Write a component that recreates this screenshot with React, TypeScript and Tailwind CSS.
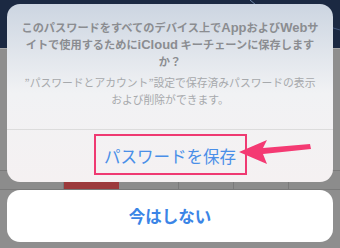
import React from 'react';

const font = { fontFamily: '"Noto Sans CJK JP", "Noto Sans", sans-serif' };

const Backdrop: React.FC = () => (
  <div className="flex flex-col h-[248px]">
    <div className="h-[48px] bg-[#1b2942] relative overflow-hidden">
      <svg width="340" height="48" className="absolute inset-0">
        <path d="M250 0 L262 10" stroke="#6f86a8" strokeWidth="1" />
        <path d="M300 18 L340 30" stroke="#41567a" strokeWidth="1" />
      </svg>
    </div>
    <div className="h-px bg-[#a8a8a8]" />
    <div className="flex-1 bg-[#8e8e8e] flex flex-col">
      <div className="h-[121px]" />
      <div className="h-[20px] flex border-y border-[#7a7a7a]">
        <div className="w-[64px] bg-[#8c8c8c] border-r border-[#7a7a7a]" />
        <div className="w-[55px] bg-[#9c3a3c]" />
        <div className="w-[60px] bg-[#8c8c8c] border-r border-[#7a7a7a]" />
        <div className="w-[55px] bg-[#8c8c8c] border-r border-[#7a7a7a]" />
        <div className="w-[55px] bg-[#8c8c8c] border-r border-[#7a7a7a]" />
        <div className="flex-1 bg-[#8c8c8c]" />
      </div>
    </div>
  </div>
);

const L: React.FC<{ children: React.ReactNode }> = ({ children }) => (
  <span className="text-[13px]" style={{ fontFamily: '"Liberation Sans", sans-serif' }}>
    {children}
  </span>
);

const App: React.FC = () => {
  return (
    <div className="w-[340px] h-[248px] relative overflow-hidden" style={font}>
      <Backdrop />
      <div className="absolute inset-0 px-[7px] pt-[4px] flex flex-col gap-[8px]">
        <div className="rounded-[13px] overflow-hidden bg-gradient-to-b from-[#ccd5e1] via-[#f1f2f4] to-[#f5f1f2] flex flex-col">
          <div className="h-[125px] flex flex-col items-center pt-[15px] text-center whitespace-nowrap">
            <p className="text-[11.2px] leading-[17px] font-bold text-[#8b8d91]">
              このパスワードをすべてのデバイス上で<L>App</L>および<L>Web</L>サ
              <br />
              イトで使用するために<L>iCloud</L> キーチェーンに保存します
              <br />
              か？
            </p>
            <p className="mt-[4px] text-[10.8px] leading-[17px] text-[#a7a9ac]">
              ”パスワードとアカウント”設定で保存済みパスワードの表示
              <br />
              および削除ができます。
            </p>
          </div>
          <div className="h-px bg-[#dcdcdc]" />
          <div className="h-[52px] relative flex items-center justify-center">
            <span className="text-[16.5px] text-[#4a8fe8] whitespace-nowrap">パスワードを保存</span>
            <div className="absolute left-[87px] top-[4px] w-[153px] h-[41px] border-2 border-[#ef3a72]" />
            <svg className="absolute left-[230px] top-[8px]" width="80" height="30" viewBox="0 0 80 30">
              <polygon
                points="2,14 30,2 26,10 73,6 74,11 26,16 30,26"
                fill="#f43a73"
              />
            </svg>
          </div>
        </div>
        <div className="h-[52px] rounded-[13px] bg-white flex items-center justify-center">
          <span className="text-[16.5px] font-bold text-[#3b85e6] whitespace-nowrap">今はしない</span>
        </div>
      </div>
    </div>
  );
};

export default App;
